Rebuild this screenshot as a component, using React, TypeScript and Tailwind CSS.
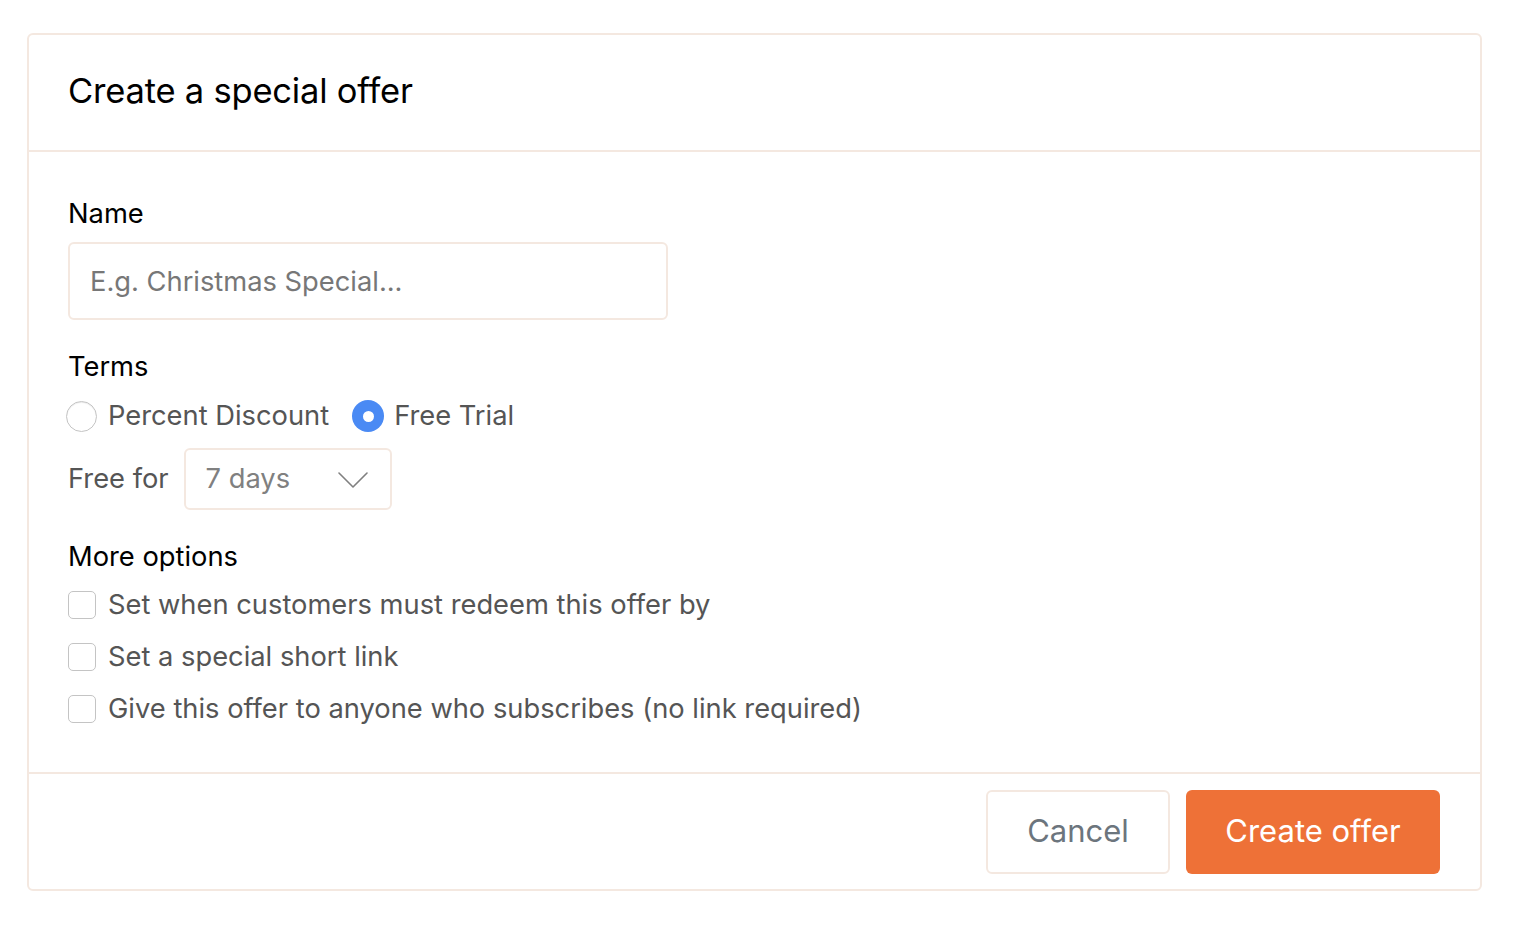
const options = [
  'Set when customers must redeem this offer by',
  'Set a special short link',
  'Give this offer to anyone who subscribes (no link required)',
];

export default function App() {
  return (
    <div className="min-h-screen bg-white pt-[33px] px-[27px] font-['Inter',sans-serif]">
      <div className="w-[1455px] rounded-md border-2 border-[#f4e8e0] bg-white">
        {/* Header */}
        <div className="h-[117px] flex items-center px-[39px] pb-[4px] border-b-2 border-[#f4e8e0]">
          <h1 className="text-[34.5px] text-black tracking-[-0.2px]">Create a special offer</h1>
        </div>

        {/* Body */}
        <div className="px-[39px] pt-[44px] pb-[45px] text-[27.3px]">
          <label className="block text-black leading-[36px]">Name</label>
          <input
            type="text"
            placeholder="E.g. Christmas Special..."
            className="mt-[10px] w-[600px] h-[78px] rounded-md border-2 border-[#f4e8e0] px-[20px] text-[27.3px] text-[#333] placeholder:text-[#777] outline-none"
          />

          <div className="mt-[29px] text-black leading-[36px]">Terms</div>
          <div className="mt-[13px] flex items-center text-[#555]">
            <span className="w-[31px] h-[31px] -ml-[2px] rounded-full border border-[#c4c4c4] bg-white shadow-[inset_0_1px_1px_rgba(0,0,0,0.08)]" />
            <span className="ml-[11px] leading-[36px]">Percent Discount</span>
            <span className="ml-[23px] w-[32px] h-[32px] rounded-full bg-[#4a8af4] flex items-center justify-center">
              <span className="w-[11px] h-[11px] rounded-full bg-white" />
            </span>
            <span className="ml-[10px] leading-[36px]">Free Trial</span>
          </div>

          <div className="mt-[14px] flex items-center text-[#555]">
            <span className="leading-[36px]">Free for</span>
            <div className="ml-[15px] w-[208px] h-[62px] rounded-md border-2 border-[#f4e8e0] flex items-center justify-between pl-[20px] pr-[22px]">
              <span className="text-[#808080]">7 days</span>
              <svg width="30" height="18" viewBox="0 0 30 18" fill="none" className="mt-[2px]">
                <polyline points="1,2 15,16 29,2" stroke="#808080" strokeWidth="1.6" strokeLinecap="round" strokeLinejoin="round" />
              </svg>
            </div>
          </div>

          <div className="mt-[29px] text-black leading-[36px]">More options</div>
          <div className="mt-[12px] flex flex-col gap-[16px] text-[#555]">
            {options.map(o => (
              <div key={o} className="flex items-center">
                <span className="w-[28px] h-[28px] rounded-[5px] border border-[#c4c4c4] bg-white" />
                <span className="ml-[12px] leading-[36px]">{o}</span>
              </div>
            ))}
          </div>
        </div>

        {/* Footer */}
        <div className="border-t-2 border-[#f4e8e0] h-[117px] flex items-center justify-end gap-[16px] pr-[40px]">
          <button className="w-[184px] h-[84px] rounded-md border-2 border-[#f4e8e0] bg-white text-[31px] text-[#6c757d]">
            Cancel
          </button>
          <button className="w-[254px] h-[84px] rounded-md bg-[#ee7137] text-[31px] text-white">
            Create offer
          </button>
        </div>
      </div>
    </div>
  );
}
